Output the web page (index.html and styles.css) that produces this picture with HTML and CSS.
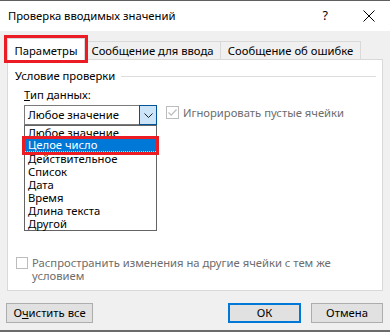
FILE: index.html
```html
<!DOCTYPE html>
<html lang="ru">
<head>
<meta charset="utf-8">
<link rel="stylesheet" href="styles.css">
</head>
<body>
<div class="topline"></div>
<div class="titlebar">
  <span class="title">Проверка вводимых значений</span>
  <span class="help">?</span>
  <svg class="close" width="12" height="12" viewBox="0 0 12 12"><path d="M0.5 0.5 L11.5 11.5 M11.5 0.5 L0.5 11.5" stroke="#000" stroke-width="1" fill="none"/></svg>
</div>
<div class="tabs">
  <div class="tab active">Параметры</div>
  <div class="tab second">Сообщение для ввода</div>
  <div class="tab third">Сообщение об ошибке</div>
</div>
<div class="panel">
  <div class="group"><span>Условие проверки</span><div class="rule"></div></div>
  <div class="row">
    <div class="field">
      <div class="label"><u>Т</u>ип данных:</div>
      <div class="combo">
        <span class="combo-text">Любое значение</span>
        <span class="combo-btn"><svg width="9" height="5" viewBox="0 0 9 5"><path d="M0.5 0.5 L4.5 4.5 L8.5 0.5" stroke="#222" stroke-width="1" fill="none"/></svg></span>
      </div>
      <ul class="list">
        <li>Любое значение</li>
        <li class="selected">Целое число</li>
        <li>Действительное</li>
        <li>Список</li>
        <li>Дата</li>
        <li>Время</li>
        <li>Длина текста</li>
        <li>Другой</li>
      </ul>
    </div>
    <div class="check ignore">
      <span class="box"><svg width="11" height="11" viewBox="0 0 11 11"><path d="M1.5 5.5 L4.2 8.2 L9.5 2.5" stroke="#bcbcbc" stroke-width="1.2" fill="none"/></svg></span>
      <span class="check-text">Игнорировать пустые ячейки</span>
    </div>
  </div>
  <div class="check spread">
    <span class="box small"></span>
    <span class="check-text wrap">Распространить изменения на другие ячейки с тем же условием</span>
  </div>
</div>
<div class="footer">
  <button class="button clear">О<u>ч</u>истить все</button>
  <div class="spacer"></div>
  <button class="button ok">ОК</button>
  <button class="button cancel">Отмена</button>
</div>
<div class="bottomline"></div>
</body>
</html>
```
FILE: styles.css
```css
* { box-sizing: border-box; margin: 0; padding: 0; }
html, body { width: 390px; height: 332px; overflow: hidden; }
body {
  background: #f0f0f0;
  font-family: "Noto Sans", "Segoe UI", sans-serif;
  font-size: 11.25px;
  color: #000;
}
.topline { height: 1px; background: #5f5f5f; }
.titlebar {
  height: 30px;
  background: #fff;
  display: flex;
  align-items: center;
  padding-left: 8px;
}
.title { flex: 1; line-height: 16px; }
.help { margin-right: 35px; font-size: 12.5px; line-height: 16px; }
.close { margin-right: 15px; display: block; }

.tabs {
  height: 28px;
  display: flex;
  align-items: flex-end;
  padding-left: 7px;
}
.tab {
  height: 18px;
  border: 1px solid #d9d9d9;
  border-bottom: none;
  border-left: none;
  display: flex;
  align-items: center;
  justify-content: center;
  line-height: 16px;
  white-space: nowrap;
}
.tab.active {
  width: 78px;
  height: 22px;
  padding-top: 2px;
  border-left: 1px solid #d9d9d9;
  background: #fff;
  margin-bottom: -1px;
  position: relative;
  z-index: 1;
  outline: 3px solid #ec1c24;
}
.tab.second { width: 136px; }
.tab.third { width: 140px; }

.panel {
  margin: 0 7px;
  height: 232px;
  border: 1px solid #d9d9d9;
  background: #fff;
  padding: 8px 6px 0 7px;
}
.group {
  display: flex;
  align-items: center;
  gap: 6px;
  line-height: 16px;
}
.rule { flex: 1; height: 1px; background: #dcdcdc; }

.row { display: flex; align-items: flex-start; }
.field { margin-left: 9px; margin-top: 3px; }
.label { line-height: 16px; }
.combo {
  margin-top: 2px;
  width: 133px;
  height: 20px;
  border: 1px solid #7a7a7a;
  display: flex;
  align-items: center;
}
.combo-text { flex: 1; padding-left: 3px; line-height: 16px; }
.combo-btn {
  width: 18px;
  height: 20px;
  margin: -1px -1px -1px 0;
  background: #cce4f7;
  border: 1px solid #005499;
  display: flex;
  align-items: center;
  justify-content: center;
}
.combo-btn svg { display: block; }
.list {
  list-style: none;
  width: 133px;
  border: 1px solid #646464;
}
.list li {
  height: 13px;
  line-height: 13px;
  padding-left: 3px;
  white-space: nowrap;
}
.list li.selected {
  background: #0078d7;
  color: #fff;
  outline: 3px solid #ec1c24;
  outline-offset: 0;
  border-bottom: 1px dotted #e9d9a0;
  line-height: 12px;
  position: relative;
  z-index: 1;
}

.check { display: flex; align-items: flex-start; color: #6d6d6d; }
.box {
  width: 13px;
  height: 13px;
  border: 1px solid #bcbcbc;
  background: #fff;
  display: flex;
  align-items: center;
  justify-content: center;
  flex: none;
}
.box svg { display: block; }
.ignore { margin-left: 9px; margin-top: 22px; }
.ignore .check-text { margin-left: 4px; line-height: 13px; }
.spread { margin-top: 25px; margin-left: 1px; }
.box.small { width: 12px; height: 12px; margin-top: 1px; }
.check-text.wrap { margin-left: 4px; line-height: 13px; width: 310px; }

.footer {
  margin-top: 12px;
  height: 20px;
  display: flex;
  padding: 0 7px 0 6px;
}
.spacer { flex: 1; }
.button {
  height: 20px;
  border: 1px solid #adadad;
  background: #e1e1e1;
  font-family: inherit;
  font-size: 11.25px;
  color: #000;
  line-height: 16px;
}
.button.clear { width: 87px; }
.button.ok { width: 73px; border: 2px solid #0078d7; margin-right: 10px; }
.button.cancel { width: 72px; }
.bottomline { margin-top: 7px; height: 2px; background: #6b6b6b; }
```
